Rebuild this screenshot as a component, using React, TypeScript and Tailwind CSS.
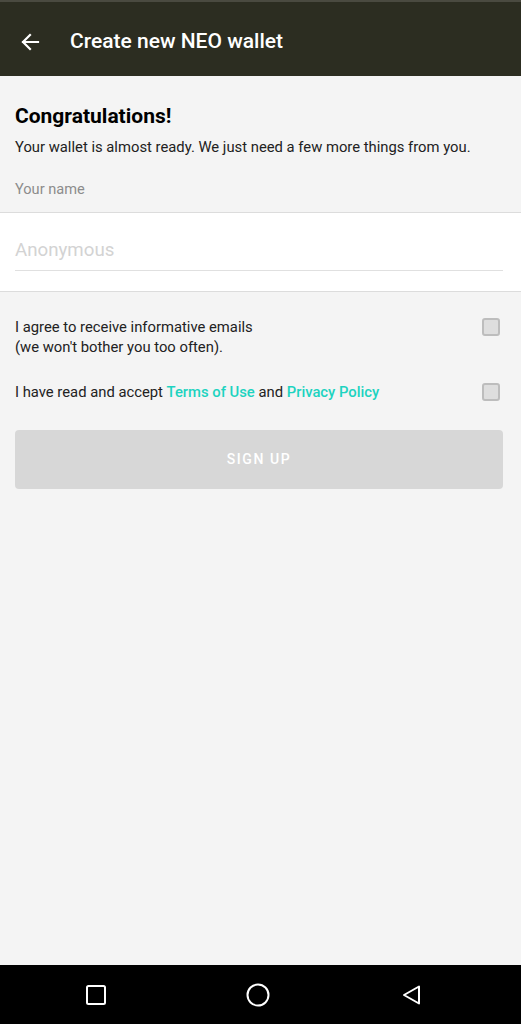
import React from "react";

function BackArrow() {
  return (
    <svg width="20" height="20" viewBox="0 0 20 20" fill="none">
      <path d="M18 10H3M10 3l-7 7 7 7" stroke="#fff" strokeWidth="2.2" strokeLinecap="square" />
    </svg>
  );
}

function Checkbox() {
  return <div className="w-[18px] h-[18px] shrink-0 rounded-[3px] border-2 border-[#bdbdbd] bg-[#dedede]" />;
}

export default function App() {
  return (
    <div
      className="w-[521px] h-[1024px] flex flex-col bg-[#f4f4f4] overflow-hidden"
      style={{ fontFamily: "Roboto, 'Liberation Sans', sans-serif" }}
    >
      {/* toolbar */}
      <header className="h-[76px] shrink-0 flex items-center pt-[5px] bg-[#2c2d21] border-t-2 border-[#4a4a40]">
        <div className="w-[70px] pl-[20px] flex items-center">
          <BackArrow />
        </div>
        <h1 className="text-white text-[21px] font-medium">Create new NEO wallet</h1>
      </header>

      <main className="flex-1 flex flex-col">
        <div className="px-[15px] pt-[26px]">
          <h2 className="text-[21px] leading-[28px] font-bold text-black">Congratulations!</h2>
          <p className="mt-[7px] text-[14.8px] leading-[20px] text-[#222]">
            Your wallet is almost ready. We just need a few more things from you.
          </p>
          <p className="mt-[22px] text-[14.6px] leading-[20px] text-[#8c8c8c]">Your name</p>
        </div>

        <div className="mt-[13px] bg-white border-y border-[#dcdcdc] h-[80px] px-[15px] pt-[25px]">
          <div className="w-[488px] border-b border-[#e0e0e0] pb-[8px] text-[18.7px] leading-[24px] text-[#d3d3d3]">
            Anonymous
          </div>
        </div>

        <div className="px-[15px] pt-[25px] flex flex-col gap-[25px]">
          <div className="flex items-start justify-between pr-[6px]">
            <p className="text-[14.8px] leading-[20px] text-[#222]">
              I agree to receive informative emails
              <br />
              (we won't bother you too often).
            </p>
            <div className="pt-[1px]">
              <Checkbox />
            </div>
          </div>
          <div className="flex items-center justify-between pr-[6px]">
            <p className="text-[14.8px] leading-[20px] text-[#222]">
              I have read and accept{" "}
              <span className="font-medium text-[#1dd3c0]">Terms of Use</span> and{" "}
              <span className="font-medium text-[#1dd3c0]">Privacy Policy</span>
            </p>
            <Checkbox />
          </div>
          <button className="mt-[3px] w-[488px] h-[59px] rounded-[4px] bg-[#d7d7d7] text-white text-[14px] font-medium tracking-[1.6px]">
            SIGN UP
          </button>
        </div>
      </main>

      {/* system nav */}
      <nav className="h-[59px] shrink-0 bg-black flex items-center pl-[85px]">
        <svg width="22" height="22" viewBox="0 0 22 22" fill="none">
          <rect x="2" y="2" width="18" height="18" rx="1.5" stroke="#fff" strokeWidth="2" />
        </svg>
        <svg className="ml-[138px]" width="26" height="26" viewBox="0 0 26 26" fill="none">
          <circle cx="13" cy="13" r="10.5" stroke="#fff" strokeWidth="2" />
        </svg>
        <svg className="ml-[130px]" width="22" height="22" viewBox="0 0 22 22" fill="none">
          <path d="M18 2.5v17L3 11z" stroke="#fff" strokeWidth="2" strokeLinejoin="round" />
        </svg>
      </nav>
    </div>
  );
}
